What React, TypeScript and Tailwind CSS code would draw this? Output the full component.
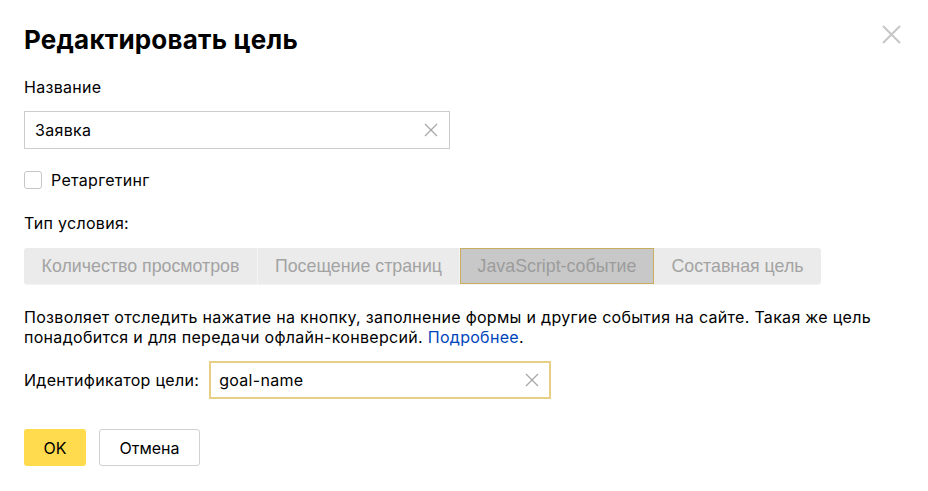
const tabs = [
  { label: 'Количество просмотров', w: 'w-[234px]' },
  { label: 'Посещение страниц', w: 'w-[202px]' },
  { label: 'JavaScript-событие', w: 'w-[194px]' },
  { label: 'Составная цель', w: 'w-[167px]' },
]

function Cross({ size, color, width }: { size: number; color: string; width: number }) {
  return (
    <svg width={size} height={size} viewBox={`0 0 ${size} ${size}`} className="shrink-0">
      <path d={`M1 1L${size - 1} ${size - 1}M${size - 1} 1L1 ${size - 1}`} stroke={color} strokeWidth={width} />
    </svg>
  )
}

export default function App() {
  return (
    <div
      className="relative w-[928px] h-[491px] bg-white text-[16px] text-black tracking-[0.3px]"
      style={{ fontFamily: 'Inter, "Liberation Sans", sans-serif' }}
    >
      <button className="absolute left-[882px] top-[25px]">
        <Cross size={19} color="#c6c6c6" width={2} />
      </button>

      <div className="px-6 pt-[24px]">
        <h1 className="text-[26px] font-bold leading-[32px] tracking-[0.2px]">Редактировать цель</h1>

        <div className="mt-[21px] leading-[20px]">Название</div>
        <div className="mt-[14px] flex items-center w-[426px] h-[38px] border border-[#cccccc] pl-[10px] pr-[11px]">
          <span className="flex-1">Заявка</span>
          <Cross size={14} color="#a8a8a8" width={1.3} />
        </div>

        <label className="mt-[21px] flex items-center gap-[9px] leading-[20px]">
          <span className="w-[18px] h-[18px] rounded-[3px] border border-[#c6c6c6] bg-white" />
          <span>Ретаргетинг</span>
        </label>

        <div className="mt-[23px] leading-[20px]">Тип условия:</div>
        <div
          className="mt-[15px] flex w-fit rounded-[3px] bg-[#ebebeb] shadow-[0_1px_0_#f3f3f3] tracking-normal text-[17.8px]"
          style={{ fontFamily: '"Liberation Sans", Arial, sans-serif' }}
        >
          {tabs.map((t, i) => (
            <div
              key={t.label}
              className={
                i === 2
                  ? `${t.w} h-[36px] flex items-center justify-center bg-[#c8c8c8] border border-[#c9ad5f] text-[#9c9c9c]`
                  : `${t.w} h-[36px] flex items-center justify-center text-[#a3a3a3] border-r border-[#f4f4f4] last:border-r-0`
              }
            >
              {t.label}
            </div>
          ))}
        </div>

        <p className="mt-[23px] leading-[20px] w-[880px]">
          Позволяет отследить нажатие на кнопку, заполнение формы и другие события на сайте. Такая же цель
          <br />
          понадобится и для передачи офлайн-конверсий. <span className="text-[#0044bb]">Подробнее</span>.
        </p>

        <div className="mt-[14px] flex items-center gap-[10px]">
          <span>Идентификатор цели:</span>
          <div className="flex items-center w-[342px] h-[38px] border-2 border-[#e6d087] pl-[8px] pr-[10px]">
            <span className="flex-1">goal-name</span>
            <Cross size={14} color="#a8a8a8" width={1.3} />
          </div>
        </div>

        <div className="mt-[30px] flex gap-[13px] tracking-normal">
          <button className="w-[62px] h-[37px] rounded-[3px] bg-[#ffdb4d]">OK</button>
          <button className="w-[101px] h-[37px] rounded-[3px] border border-[#d0d0d0] bg-white">Отмена</button>
        </div>
      </div>
    </div>
  )
}
